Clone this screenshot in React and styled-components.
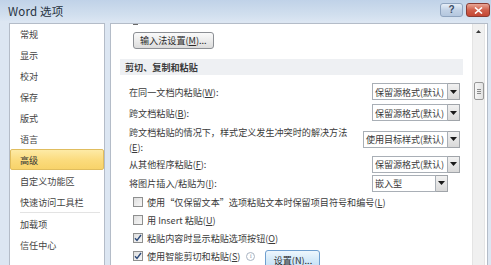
import React from 'react'
import styled, { createGlobalStyle } from 'styled-components'

const GlobalStyle = createGlobalStyle`
  html, body {
    margin: 0;
    padding: 0;
    background: #dbe5f1;
  }
  body {
    font-family: "Noto Sans CJK SC", "Liberation Sans", sans-serif;
    color: #3a3a3a;
  }
`

const navItems = [
  { label: '常规' },
  { label: '显示' },
  { label: '校对' },
  { label: '保存' },
  { label: '版式' },
  { label: '语言' },
  { label: '高级', active: true },
  { label: '自定义功能区' },
  { label: '快速访问工具栏', sepAfter: true },
  { label: '加载项' },
  { label: '信任中心' },
]

const Arrow = () => (
  <svg width="7" height="4" viewBox="0 0 7 4">
    <path d="M0 0h7L3.5 4z" fill="#1a1a1a" />
  </svg>
)

const Check = () => (
  <svg width="8" height="8" viewBox="0 0 8 8">
    <path d="M1 4.2l2 2.2L7 1" fill="none" stroke="#2c4a7a" strokeWidth="1.4" />
  </svg>
)

const Select = ({ value, w }) => (
  <SelectBox>
    <SelectValue $w={w}>{value}</SelectValue>
    <SelectArrow>
      <Arrow />
    </SelectArrow>
  </SelectBox>
)

export default () => (
  <Window>
    <GlobalStyle />
    <TitleBar>
      <Title>Word 选项</Title>
      <Caption>
        <HelpButton>?</HelpButton>
        <CloseButton>
          <svg width="9" height="7" viewBox="0 0 9 7">
            <path d="M1 0.5l7 6M8 0.5l-7 6" stroke="#fff" strokeWidth="1.6" />
          </svg>
        </CloseButton>
      </Caption>
    </TitleBar>

    <Body>
      <Nav>
        <NavList>
          {navItems.map((item) => (
            <React.Fragment key={item.label}>
              <NavItem $active={item.active}>{item.label}</NavItem>
              {item.sepAfter && <NavSep />}
            </React.Fragment>
          ))}
        </NavList>
      </Nav>

      <Main>
        <Content>
          <ScrollStub />
          <Button>
            输入法设置(<u>M</u>)...
          </Button>
          <SectionHeader>剪切、复制和粘贴</SectionHeader>

          <Row $h={21}>
            <Label>
              在同一文档内粘贴(<u>W</u>):
            </Label>
            <Select value="保留源格式(默认)" w={76} />
          </Row>
          <Row $h={21}>
            <Label>
              跨文档粘贴(<u>B</u>):
            </Label>
            <Select value="保留源格式(默认)" w={76} />
          </Row>
          <Row $h={32}>
            <Label $wrap>
              跨文档粘贴的情况下，样式定义发生冲突时的解决方法
              <br />(<u>E</u>):
            </Label>
            <Select value="使用目标样式(默认)" w={85} />
          </Row>
          <Row $h={18}>
            <Label>
              从其他程序粘贴(<u>F</u>):
            </Label>
            <Select value="保留源格式(默认)" w={76} />
          </Row>
          <Row $h={20} $pr={22}>
            <Label>
              将图片插入/粘贴为(<u>I</u>):
            </Label>
            <Select value="嵌入型" w={64} />
          </Row>

          <CheckRow>
            <Box />
            <Label>
              使用“仅保留文本”选项粘贴文本时保留项目符号和编号(<u>L</u>)
            </Label>
          </CheckRow>
          <CheckRow>
            <Box />
            <Label>
              用 Insert 粘贴(<u>U</u>)
            </Label>
          </CheckRow>
          <CheckRow>
            <Box>
              <Check />
            </Box>
            <Label>
              粘贴内容时显示粘贴选项按钮(<u>O</u>)
            </Label>
          </CheckRow>
          <CheckRow>
            <Box>
              <Check />
            </Box>
            <Label>
              使用智能剪切和粘贴(<u>S</u>)
            </Label>
            <Info>i</Info>
            <SmallButton>
              设置(<u>N</u>)...
            </SmallButton>
          </CheckRow>
        </Content>

        <Scrollbar>
          <ScrollUp>
            <svg width="5" height="3" viewBox="0 0 5 3">
              <path d="M0 3h5L2.5 0z" fill="#3a3a3a" />
            </svg>
          </ScrollUp>
          <Thumb>
            <Grip />
            <Grip />
            <Grip />
          </Thumb>
        </Scrollbar>
      </Main>
    </Body>
  </Window>
)

const Window = styled.div`
  width: 491px;
  height: 265px;
  display: flex;
  flex-direction: column;
  overflow: hidden;
  background: #dce6f2;
`

const TitleBar = styled.div`
  height: 21px;
  flex: none;
  display: flex;
  align-items: center;
  padding: 0 1px 0 8px;
  background: linear-gradient(#c0d2e8, #d1dfee 70%, #dae5f2);
`

const Title = styled.div`
  font-size: 11.5px;
  color: #26323f;
  letter-spacing: 0.2px;
`

const Caption = styled.div`
  margin-left: auto;
  display: flex;
  gap: 3px;
  align-self: flex-start;
  padding-top: 3px;
`

const HelpButton = styled.div`
  width: 21px;
  height: 12px;
  border: 1px solid #8fa4bf;
  border-radius: 3px;
  background: linear-gradient(#e6eef8, #c2d2e6 50%, #b4c7de);
  color: #3b4d66;
  font-family: "Liberation Sans", sans-serif;
  font-size: 10px;
  font-weight: bold;
  line-height: 12px;
  text-align: center;
`

const CloseButton = styled.div`
  width: 22px;
  height: 12px;
  border: 1px solid #8a3b33;
  border-radius: 3px;
  background: linear-gradient(#e9a797, #d0604c 50%, #c44734);
  display: flex;
  align-items: center;
  justify-content: center;
`

const Body = styled.div`
  flex: 1;
  min-height: 0;
  display: flex;
  gap: 5px;
  padding: 2px 3px 0 9px;
`

const Nav = styled.div`
  width: 96px;
  box-sizing: border-box;
  flex: none;
  background: #fff;
  border: 1px solid #b4bcc8;
  border-bottom: none;
`

const NavList = styled.div`
  display: flex;
  flex-direction: column;
  margin-top: -1px;
`

const NavItem = styled.div`
  height: 21px;
  box-sizing: border-box;
  display: flex;
  align-items: center;
  padding-left: 10px;
  font-size: 9.1px;
  color: #444;
  border-radius: 2px;
  ${(p) =>
    p.$active &&
    `
    background: linear-gradient(#fdeaa6, #fbdb7c 55%, #f8d36a);
    border: 1px solid #e0bd5e;
    padding-left: 9px;
    color: #333;
  `}
`

const NavSep = styled.div`
  height: 1px;
  margin: 0 4px 0 10px;
  background: #e3e3e3;
`

const Main = styled.div`
  flex: 1;
  display: flex;
  background: #fff;
  border: 1px solid #b4bcc8;
  border-bottom: none;
`

const Content = styled.div`
  flex: 1;
  display: flex;
  flex-direction: column;
  min-width: 0;
`

const ScrollStub = styled.div`
  width: 5px;
  height: 1px;
  margin-left: 22px;
  background: #6a6a6a;
`

const Button = styled.div`
  align-self: flex-start;
  margin: 7px 0 0 22px;
  height: 19px;
  box-sizing: border-box;
  padding: 0 6px;
  display: flex;
  align-items: center;
  border: 1px solid #8c8f94;
  border-radius: 3px;
  background: linear-gradient(#fafafa, #ececec 50%, #dcdcdc);
  font-size: 9.1px;
  color: #2a2a2a;
`

const SectionHeader = styled.div`
  margin: 10px 7px 6px 9px;
  height: 19px;
  display: flex;
  align-items: center;
  padding-left: 5px;
  background: #eef0f3;
  font-size: 9.1px;
  font-weight: bold;
  color: #3a3a3a;
`

const Row = styled.div`
  height: ${(p) => p.$h}px;
  flex: none;
  display: flex;
  align-items: center;
  padding: 0 ${(p) => p.$pr || 10}px 0 18px;
`

const Label = styled.div`
  font-size: 9.1px;
  color: #3a3a3a;
  white-space: nowrap;
  line-height: ${(p) => (p.$wrap ? '15px' : 'normal')};
  ${(p) => p.$wrap && 'align-self: flex-start; padding-top: 2px;'}
`

const SelectBox = styled.div`
  margin-left: auto;
  display: flex;
  height: 17px;
`

const SelectValue = styled.div`
  width: ${(p) => p.$w}px;
  box-sizing: border-box;
  border: 1px solid #a9afb6;
  display: flex;
  align-items: center;
  padding-left: 2px;
  font-size: 9.1px;
  letter-spacing: -0.1px;
  color: #3a3a3a;
  white-space: nowrap;
  overflow: hidden;
`

const SelectArrow = styled.div`
  width: 12px;
  box-sizing: border-box;
  border: 1px solid #a0a4a9;
  border-left: none;
  background: linear-gradient(#f1f1f1, #d9d9d9);
  display: flex;
  align-items: center;
  justify-content: center;
`

const CheckRow = styled.div`
  height: 18px;
  flex: none;
  display: flex;
  align-items: center;
  gap: 4px;
  padding-left: 22px;
`

const Box = styled.div`
  width: 10px;
  height: 10px;
  box-sizing: border-box;
  border: 1px solid #8e8f8f;
  background: linear-gradient(135deg, #dedede, #f7f7f7);
  display: flex;
  align-items: center;
  justify-content: center;
`

const Info = styled.div`
  width: 7px;
  height: 7px;
  margin-left: 2px;
  border: 1px solid #a9b4c2;
  border-radius: 50%;
  font-family: "Liberation Serif", serif;
  font-size: 6px;
  line-height: 7px;
  text-align: center;
  color: #7a8aa0;
`

const SmallButton = styled.div`
  margin-left: 6px;
  align-self: flex-start;
  margin-top: 3px;
  width: 55px;
  height: 19px;
  box-sizing: border-box;
  border: 1px solid #6f9fcf;
  border-radius: 3px;
  background: linear-gradient(#eef7fd, #d5eaf9 50%, #c3e0f6);
  display: flex;
  align-items: center;
  justify-content: center;
  font-size: 9.1px;
  color: #2a2a2a;
`

const Scrollbar = styled.div`
  width: 17px;
  flex: none;
  display: flex;
  flex-direction: column;
  align-items: center;
  background: linear-gradient(90deg, #fff 0 2px, #e4e4e4 2px 3px, #f0f0f0 3px 14px, #e4e4e4 14px 15px, #fff 15px);
`

const ScrollUp = styled.div`
  height: 14px;
  display: flex;
  align-items: center;
  justify-content: center;
`

const Thumb = styled.div`
  margin-top: 44px;
  width: 10px;
  height: 18px;
  box-sizing: border-box;
  border: 1px solid #989898;
  border-radius: 2px;
  background: linear-gradient(90deg, #f6f6f6, #e2e2e2);
  display: flex;
  flex-direction: column;
  align-items: center;
  justify-content: center;
  gap: 1px;
`

const Grip = styled.div`
  width: 4px;
  height: 1px;
  background: #8a8a8a;
`
